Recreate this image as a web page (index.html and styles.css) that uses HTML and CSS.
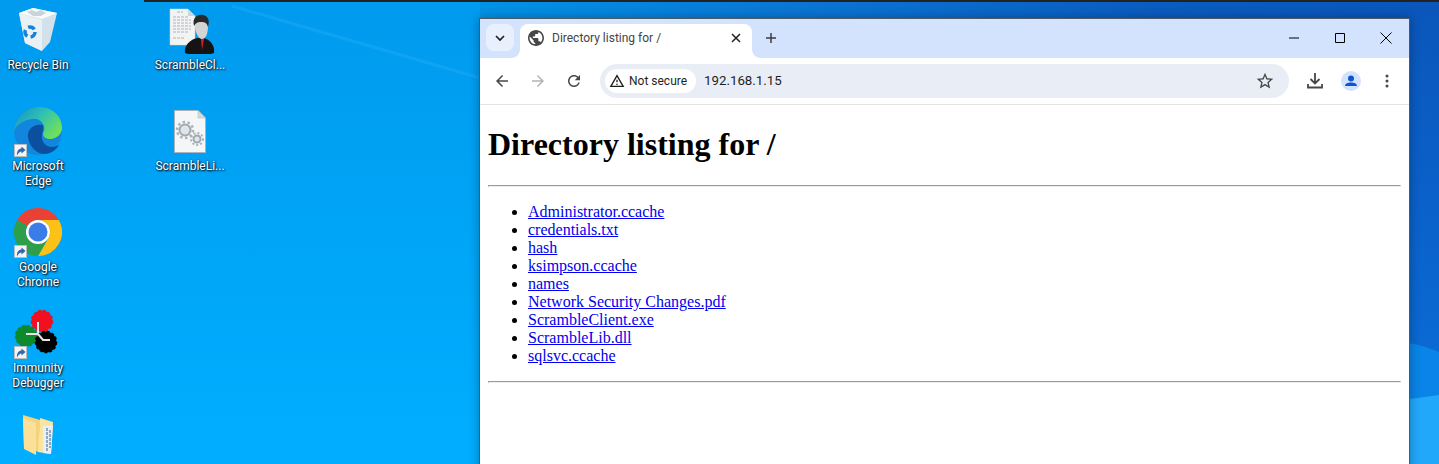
FILE: index.html
```html
<!DOCTYPE html>
<html lang="en">
<head>
  <meta charset="UTF-8">
  <title>Directory listing for /</title>
  <link rel="stylesheet" href="styles.css">
</head>
<body>
  <div class="screen">
    <!-- wallpaper -->
    <svg class="wallpaper" width="1439" height="464" viewBox="0 0 1439 464" aria-hidden="true">
      <defs>
        <linearGradient id="wallLeft" x1="0" y1="0" x2="0" y2="1">
          <stop offset="0" stop-color="#009aee"/>
          <stop offset="0.55" stop-color="#00a6f8"/>
          <stop offset="1" stop-color="#00aeff"/>
        </linearGradient>
        <linearGradient id="wallRight" x1="0" y1="0" x2="1" y2="0">
          <stop offset="0" stop-color="#0092e6"/>
          <stop offset="0.3" stop-color="#0a78d6"/>
          <stop offset="0.7" stop-color="#0a5cc0"/>
          <stop offset="1" stop-color="#0a56bb"/>
        </linearGradient>
        <linearGradient id="wallEdge" x1="0" y1="0" x2="0" y2="1">
          <stop offset="0" stop-color="#0a56bb"/>
          <stop offset="0.7" stop-color="#0a68d2"/>
          <stop offset="1" stop-color="#0a70d8"/>
        </linearGradient>
      </defs>
      <rect width="1439" height="464" fill="url(#wallLeft)"/>
      <rect x="480" width="959" height="20" fill="url(#wallRight)"/>
      <rect x="1409" width="30" height="464" fill="url(#wallEdge)"/>
      <path d="M1409 343C1420 345 1430 348 1439 352V464H1409Z" fill="#0a84e8"/>
      <path d="M1409 399C1420 398 1430 396 1439 395V464H1409Z" fill="#22a8fa"/>
      <path d="M232 6L480 78" stroke="#2fb4fb" stroke-width="3" opacity=".3"/>
    </svg>
    <div class="topbar"></div>

    <div class="desktop">
      <div class="desktop-col">
        <div class="icon">
          <svg width="48" height="48" viewBox="0 0 48 48">
            <path d="M5 7L19 2 43 7 36 36 28 45 11 37Z" fill="#d3e2ea"/>
            <path d="M5 7L28 14 28 45 11 37Z" fill="#e9f1f5"/>
            <path d="M5 7L19 2 43 7 28 13Z" fill="#f8fafb"/>
            <path d="M13 6l5-2 4 2 5-2 5 3-5 3-8 0z" fill="#c9d4da"/>
            <circle cx="16" cy="26" r="5" fill="none" stroke="#1b80d8" stroke-width="3.500" stroke-dasharray="7 3.500"/>
          </svg>
          <span>Recycle Bin</span>
        </div>
        <div class="icon">
          <svg width="48" height="48" viewBox="0 0 48 48">
            <defs>
              <linearGradient id="edgeTop" x1="0" y1="0" x2="1" y2=".6">
                <stop offset="0" stop-color="#0f8ed0"/>
                <stop offset=".55" stop-color="#31c2b0"/>
                <stop offset="1" stop-color="#6ee05a"/>
              </linearGradient>
            </defs>
            <circle cx="24" cy="24" r="24" fill="#1186dc"/>
            <path d="M0 24C1 10 11 0 25 0c13 0 23 9 23 21 0 5-4 10-11 11-5 0-8-2-8-5 0-2 2-3 1-8-2-5-6-8-12-7C10 13 3 17 0 24Z" fill="url(#edgeTop)"/>
            <path d="M29 18C18 16 13 24 14 30 15 40 24 48 32 47 38 46 43 42 45 38 38 42 30 40 28 32 27 28 30 24 29 18Z" fill="#0c4f9e"/>
          </svg>
          <span>Microsoft Edge</span>
          <svg class="shortcut" width="13" height="13" viewBox="0 0 13 13"><use href="#shortcutArrow"/></svg>
        </div>
        <div class="icon">
          <svg width="48" height="48" viewBox="0 0 48 48">
            <path d="M3.200 12A24 24 0 0 1 44.800 12H24A12 12 0 0 0 13.600 18Z" fill="#e94235"/>
            <path d="M44.800 12A24 24 0 0 1 24 48L34.400 30A12 12 0 0 0 24 12Z" fill="#fbc116"/>
            <path d="M3.200 12A24 24 0 0 0 24 48L34.400 30A12 12 0 0 1 13.600 18Z" fill="#2f9e4a"/>
            <circle cx="24" cy="24" r="12" fill="#fff"/>
            <circle cx="24" cy="24" r="9.500" fill="#3b7de8"/>
          </svg>
          <span>Google Chrome</span>
          <svg class="shortcut" width="13" height="13" viewBox="0 0 13 13"><use href="#shortcutArrow"/></svg>
        </div>
        <div class="icon">
          <svg width="48" height="48" viewBox="0 0 48 48">
            <circle cx="28" cy="12" r="10.500" fill="#f01020" stroke="#f01020" stroke-width="1.500" stroke-dasharray="3 2"/>
            <circle cx="12" cy="27" r="10.500" fill="#0d8a2c" stroke="#0d8a2c" stroke-width="1.500" stroke-dasharray="3 2"/>
            <circle cx="32" cy="33" r="10.500" fill="#000" stroke="#000" stroke-width="1.500" stroke-dasharray="3 2"/>
            <path d="M24 13V25H12M24 25L29 31H36" fill="none" stroke="#e4e4e4" stroke-width="2"/>
          </svg>
          <span>Immunity Debugger</span>
          <svg class="shortcut" width="13" height="13" viewBox="0 0 13 13"><use href="#shortcutArrow"/></svg>
        </div>
        <div class="icon">
          <svg width="48" height="48" viewBox="0 0 48 48">
            <path d="M9 5L26 10 25 42 10 38Z" fill="#f6d27a"/>
            <path d="M26 8L39 12 37 44 24 42Z" fill="#fbe3a2"/>
            <path d="M29 16L39 15 37 44 29 43Z" fill="#e8eef2"/>
            <path d="M33 18v23M36 20v18" stroke="#6d93b8" stroke-width="1.500" stroke-dasharray="3 1"/>
            <path d="M9 8L22 13 22 45 10 39Z" fill="#fbe09a"/>
          </svg>
        </div>
      </div>

      <div class="desktop-col">
        <div class="icon">
          <svg width="48" height="48" viewBox="0 0 48 48">
            <path d="M4 3H22L29 10V39H4Z" fill="#f2f3f3" stroke="#d2d6d8" stroke-width=".5"/>
            <path d="M22 3L29 10H22Z" fill="#cfd4d6"/>
            <path d="M11 6h6M7 11h16M7 14h18M7 17h18M7 20h18M7 23h18M7 26h16M7 32h12" stroke="#b0b6ba" stroke-width="1.200" stroke-dasharray="3 1"/>
            <path d="M19 47C18 39 24 34 31 32L38 32C44 34 49 39 48 47 40 50 27 50 19 47Z" fill="#141414"/>
            <path d="M34 11C29 11 28 17 29 22 30 28 33 33 36 33 40 33 42 27 42 20 42 15 40 11 34 11Z" fill="#d4d4d4"/>
            <path d="M28 20C26 12 31 8 37 9 42 10 44 14 42 21 41 17 39 16 35 16 31 16 30 17 28 20Z" fill="#2a2a2a"/>
            <path d="M35 33L36 44 38 33Z" fill="#d0202a"/>
          </svg>
          <span>ScrambleCl...</span>
        </div>
        <div class="icon">
          <svg width="48" height="48" viewBox="0 0 48 48">
            <path d="M8.500 3.500H32L39.500 11V45.500H8.500Z" fill="#f4f6f7" stroke="#aab4ba"/>
            <path d="M32 3.500L39.500 11H32Z" fill="#d4dbdf" stroke="#aab4ba" stroke-width=".5"/>
            <circle cx="19" cy="23" r="5.500" fill="#dfe5e8" stroke="#9faab0" stroke-width="2"/>
            <circle cx="19" cy="23" r="8" fill="none" stroke="#a9b3b9" stroke-width="2.500" stroke-dasharray="2.500 2.500"/>
            <circle cx="31" cy="32" r="3.500" fill="#dfe5e8" stroke="#9faab0" stroke-width="2"/>
            <circle cx="31" cy="32" r="6" fill="none" stroke="#a9b3b9" stroke-width="2" stroke-dasharray="2 2"/>
          </svg>
          <span>ScrambleLi...</span>
        </div>
      </div>
    </div>

    <div class="window">
      <div class="tabstrip">
        <button class="tab-search">
          <svg width="12" height="12" viewBox="0 0 12 12"><path d="M2 4l4 4 4-4" fill="none" stroke="#1f1f1f" stroke-width="1.700"/></svg>
        </button>
        <div class="tab">
          <svg width="16" height="16" viewBox="2 2 20 20"><path fill="#474747" d="M12 2C6.480 2 2 6.480 2 12s4.480 10 10 10 10-4.480 10-10S17.520 2 12 2zm-1 17.930c-3.950-.490-7-3.850-7-7.930 0-.620.080-1.210.210-1.790L9 15v1c0 1.100.900 2 2 2v1.930zm6.900-2.540c-.260-.810-1-1.390-1.900-1.390h-1v-3c0-.550-.450-1-1-1H8v-2h2c.550 0 1-.450 1-1V7h2c1.100 0 2-.900 2-2v-.410c2.930 1.190 5 4.060 5 7.410 0 2.080-.800 3.970-2.100 5.390z"/></svg>
          <span class="tab-title">Directory listing for /</span>
          <svg class="tab-close" width="10" height="10" viewBox="0 0 10 10"><path d="M1 1l8 8M9 1l-8 8" stroke="#1f1f1f" stroke-width="1.500"/></svg>
        </div>
        <svg class="new-tab" width="12" height="12" viewBox="0 0 12 12"><path d="M6 1v10M1 6h10" stroke="#3c3c3c" stroke-width="1.500"/></svg>
        <div class="win-controls">
          <div class="win-btn"><svg width="10" height="10" viewBox="0 0 10 10"><path d="M0 5h10" stroke="#000"/></svg></div>
          <div class="win-btn"><svg width="10" height="10" viewBox="0 0 10 10"><path d="M.5.5h9v9h-9z" fill="none" stroke="#000"/></svg></div>
          <div class="win-btn"><svg width="12" height="12" viewBox="0 0 12 12"><path d="M.5.5l11 11M11.500.5l-11 11" stroke="#000"/></svg></div>
        </div>
      </div>

      <div class="toolbar">
        <div class="nav-btn">
          <svg width="18" height="18" viewBox="0 0 24 24"><path fill="#474747" d="M20 11H7.830l5.590-5.590L12 4l-8 8 8 8 1.410-1.410L7.830 13H20v-2z"/></svg>
        </div>
        <div class="nav-btn">
          <svg width="18" height="18" viewBox="0 0 24 24"><path fill="#b4b4b4" d="M4 11h12.170l-5.590-5.590L12 4l8 8-8 8-1.410-1.410L16.170 13H4v-2z"/></svg>
        </div>
        <div class="nav-btn">
          <svg width="18" height="18" viewBox="0 0 24 24"><path fill="#474747" d="M17.650 6.350C16.200 4.900 14.210 4 12 4c-4.420 0-7.990 3.580-7.990 8s3.570 8 7.990 8c3.730 0 6.840-2.550 7.730-6h-2.080c-.820 2.330-3.040 4-5.650 4-3.310 0-6-2.690-6-6s2.690-6 6-6c1.660 0 3.140.690 4.220 1.780L13 11h7V4l-2.350 2.350z"/></svg>
        </div>
        <div class="omnibox">
          <div class="security-chip">
            <svg width="16" height="16" viewBox="0 0 24 24"><path fill="#1f1f1f" d="M12 5.990L19.530 19H4.470L12 5.990M12 2L1 21h22L12 2zm1 14h-2v2h2v-2zm0-6h-2v4h2v-4z"/></svg>
            <span>Not secure</span>
          </div>
          <span class="url">192.168.1.15</span>
          <svg class="star" width="20" height="20" viewBox="0 0 24 24"><path fill="#474747" d="M22 9.240l-7.190-.620L12 2 9.190 8.630 2 9.240l5.460 4.730L5.820 21 12 17.270 18.180 21l-1.630-7.030L22 9.240zM12 15.400l-3.760 2.270 1-4.280-3.320-2.880 4.380-.380L12 6.100l1.710 4.040 4.380.380-3.320 2.880 1 4.280L12 15.400z"/></svg>
        </div>
        <div class="toolbar-right">
          <svg width="16" height="16" viewBox="0 0 16 16"><path d="M8 0v10M3.500 6L8 10.500 12.500 6M1 11v3.500h14V11" fill="none" stroke="#474747" stroke-width="1.800"/></svg>
          <div class="avatar">
            <svg width="20" height="20" viewBox="0 0 20 20">
              <circle cx="10" cy="7.500" r="3" fill="#0b57d0"/>
              <path d="M4 15c0-2.500 3-3.500 6-3.500s6 1 6 3.500z" fill="#0b57d0"/>
            </svg>
          </div>
          <svg class="kebab" width="4" height="14" viewBox="0 0 4 14"><circle cx="2" cy="2" r="1.500" fill="#474747"/><circle cx="2" cy="7" r="1.500" fill="#474747"/><circle cx="2" cy="12" r="1.500" fill="#474747"/></svg>
        </div>
      </div>

      <div class="page">
        <h1>Directory listing for /</h1>
        <hr>
        <ul>
          <li><a href="#">Administrator.ccache</a></li>
          <li><a href="#">credentials.txt</a></li>
          <li><a href="#">hash</a></li>
          <li><a href="#">ksimpson.ccache</a></li>
          <li><a href="#">names</a></li>
          <li><a href="#">Network Security Changes.pdf</a></li>
          <li><a href="#">ScrambleClient.exe</a></li>
          <li><a href="#">ScrambleLib.dll</a></li>
          <li><a href="#">sqlsvc.ccache</a></li>
        </ul>
        <hr>
      </div>
    </div>

    <svg class="sprites" width="0" height="0" aria-hidden="true">
      <symbol id="shortcutArrow" viewBox="0 0 13 13">
        <rect x=".5" y=".5" width="12" height="12" fill="#f4f4f4" stroke="#b9bcbf"/>
        <path d="M3 11.500C2.500 7 5 4.500 7.500 4.500V2.500L11.500 6 7.500 9.500V7.500C6 7.500 4.500 8.500 3 11.500Z" fill="#2f66b0"/>
      </symbol>
    </svg>
  </div>
</body>
</html>
```

FILE: styles.css
```css
html, body {
  margin: 0;
  height: 100%;
  overflow: hidden;
}
.screen {
  position: relative;
  width: 1439px;
  height: 464px;
  overflow: hidden;
  font-family: Roboto, sans-serif;
}
.wallpaper {
  position: absolute;
  left: 0;
  top: 0;
}
.sprites {
  position: absolute;
}
.topbar {
  position: absolute;
  left: 144px;
  right: 0;
  top: 0;
  height: 2px;
  background: #222;
}

/* desktop icons */
.desktop {
  position: relative;
  display: flex;
  gap: 76px;
  padding-top: 6px;
}
.desktop-col {
  width: 76px;
  display: flex;
  flex-direction: column;
}
.icon {
  position: relative;
  height: 101px;
  display: flex;
  flex-direction: column;
  align-items: center;
  text-align: center;
  color: #fff;
  font-size: 12px;
  line-height: 15px;
  text-shadow: 1px 1px 2px #000, 0 0 2px rgba(0,0,40,.8);
}
.icon span {
  margin-top: 4px;
  width: 72px;
}
.shortcut {
  position: absolute;
  left: 14px;
  top: 37px;
}

/* browser window */
.window {
  position: absolute;
  left: 479px;
  top: 18px;
  width: 929px;
  height: 500px;
  display: flex;
  flex-direction: column;
  background: #fff;
  border: 1px solid #4c5a66;
  box-shadow: 0 0 10px rgba(0,0,0,.3);
}
.tabstrip {
  height: 39px;
  flex: none;
  display: flex;
  align-items: flex-start;
  background: #d3e3fd;
  padding: 5px 0 0 6px;
  box-sizing: border-box;
}
.tab-search {
  width: 28px;
  height: 27px;
  padding: 0;
  border: none;
  border-radius: 8px;
  background: #e8f0fe;
  display: flex;
  align-items: center;
  justify-content: center;
}
.tab {
  position: relative;
  width: 232px;
  height: 34px;
  margin-left: 6px;
  padding: 0 11px 6px 8px;
  box-sizing: border-box;
  display: flex;
  align-items: center;
  background: #fff;
  border-radius: 8px 8px 0 0;
}
.tab::before,
.tab::after {
  content: "";
  position: absolute;
  bottom: 0;
  width: 8px;
  height: 8px;
}
.tab::before {
  left: -8px;
  background: radial-gradient(circle at 0 0, transparent 7.5px, #fff 8px);
}
.tab::after {
  right: -8px;
  background: radial-gradient(circle at 100% 0, transparent 7.5px, #fff 8px);
}
.tab-title {
  flex: 1;
  margin-left: 8px;
  font-size: 12px;
  color: #444;
}
.new-tab {
  margin: 8px 0 0 13px;
}
.win-controls {
  margin-left: auto;
  height: 28px;
  display: flex;
}
.win-btn {
  width: 46px;
  display: flex;
  align-items: center;
  justify-content: center;
}
.toolbar {
  height: 47px;
  flex: none;
  display: flex;
  align-items: center;
  padding: 0 0 1px 4px;
  box-sizing: border-box;
  background: #fff;
  border-radius: 8px 8px 0 0;
  border-bottom: 1px solid #e3e3e3;
}
.nav-btn {
  width: 36px;
  display: flex;
  justify-content: center;
}
.omnibox {
  width: 689px;
  height: 34px;
  margin-left: 8px;
  padding: 0 14px 0 5px;
  box-sizing: border-box;
  display: flex;
  align-items: center;
  background: #e9eef6;
  border-radius: 17px;
}
.security-chip {
  height: 24px;
  width: 91px;
  padding-left: 4px;
  box-sizing: border-box;
  display: flex;
  align-items: center;
  gap: 4px;
  background: #fff;
  border-radius: 12px;
  font-size: 12px;
  color: #1f1f1f;
}
.url {
  margin-left: 8px;
  font-size: 13.3px;
  color: #1f1f1f;
}
.star {
  margin-left: auto;
}
.toolbar-right {
  flex: 1;
  display: flex;
  align-items: center;
  padding-left: 18px;
  gap: 18px;
}
.avatar {
  width: 20px;
  height: 20px;
  border-radius: 50%;
  background: #d3e3fd;
}
.kebab {
  margin-left: 6px;
}

/* page content, browser defaults */
.page {
  flex: 1;
  padding: 0 8px;
  display: flow-root;
  font-family: "Liberation Serif", serif;
  font-size: 16px;
  color: #000;
}
.page h1 {
  font-size: 32px;
}
.page a {
  color: #00e;
}
```
